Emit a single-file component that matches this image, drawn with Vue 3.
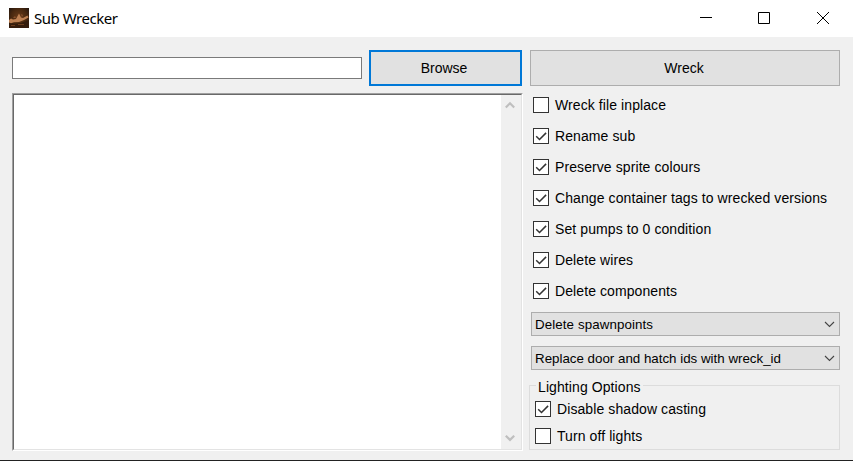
<script setup>
import { ref } from 'vue'

const path = ref('')
const log = ref('')
const options = ref([
  { label: 'Wreck file inplace', on: false },
  { label: 'Rename sub', on: true },
  { label: 'Preserve sprite colours', on: true },
  { label: 'Change container tags to wrecked versions', on: true },
  { label: 'Set pumps to 0 condition', on: true },
  { label: 'Delete wires', on: true },
  { label: 'Delete components', on: true },
])
const lighting = ref([
  { label: 'Disable shadow casting', on: true },
  { label: 'Turn off lights', on: false },
])
const selects = ['Delete spawnpoints', 'Replace door and hatch ids with wreck_id']
</script>

<template>
  <div class="window">
    <header class="titlebar">
      <svg class="logo" width="20" height="20" viewBox="0 0 20 20">
        <defs>
          <radialGradient id="glow" cx="50%" cy="45%" r="65%">
            <stop offset="0" stop-color="#6a3c1a" />
            <stop offset="0.6" stop-color="#48280f" />
            <stop offset="1" stop-color="#24160e" />
          </radialGradient>
        </defs>
        <rect width="20" height="20" fill="url(#glow)" />
        <path d="M0 15l5 1 7-1 8-3v8H0z" fill="#351c0c" />
        <path d="M0 12l2-1.5 2 1 3-.5 3-5.5 2 4 2 .5 4.500-2.500 1 2-4.500 2.500-5 2-5 .3-3 1-2-.8z" fill="#bd8052" />
        <path d="M4 10l2-2 1 2zM12 6l2 1-1 2z" fill="#8a532c" />
        <path d="M2 17.500h4M9 16.500h6" stroke="#6d3d1c" stroke-width="1" />
      </svg>
      <h1 class="title">Sub Wrecker</h1>
      <div class="controls">
        <svg width="12" height="12" viewBox="0 0 12 12"><path d="M0 5.5h12" /></svg>
        <svg width="12" height="12" viewBox="0 0 12 12"><path d="M.5 .5h11v11H.5z" /></svg>
        <svg width="12" height="12" viewBox="0 0 12 12"><path d="M0 0l12 12M12 0L0 12" /></svg>
      </div>
    </header>

    <main class="content">
      <section class="left">
        <div class="file-row">
          <input v-model="path" class="path" type="text" />
          <button class="btn focused">Browse</button>
        </div>
        <div class="log">
          <textarea v-model="log" class="log-text"></textarea>
          <div class="scrollbar">
            <svg width="10" height="8" viewBox="0 0 10 8"><path d="M.8 6.5L5 2.300l4.200 4.200" /></svg>
            <svg width="10" height="8" viewBox="0 0 10 8"><path d="M.8 1.700L5 5.900l4.200-4.200" /></svg>
          </div>
        </div>
      </section>

      <section class="right">
        <button class="btn">Wreck</button>
        <div class="options">
          <label v-for="o in options" :key="o.label" class="check" @click="o.on = !o.on">
            <span class="box">
              <svg v-if="o.on" width="14" height="14" viewBox="0 0 14 14"><path d="M2.200 7.300l3.300 3.200 6.600-6.600" /></svg>
            </span>
            <span class="check-label">{{ o.label }}</span>
          </label>
        </div>
        <div class="selects">
          <div v-for="s in selects" :key="s" class="select">
            <span>{{ s }}</span>
            <svg width="11" height="7" viewBox="0 0 11 7"><path d="M1 1l4.500 4.500L10 1" /></svg>
          </div>
        </div>
        <fieldset class="group">
          <legend>Lighting Options</legend>
          <label v-for="o in lighting" :key="o.label" class="check" @click="o.on = !o.on">
            <span class="box">
              <svg v-if="o.on" width="14" height="14" viewBox="0 0 14 14"><path d="M2.200 7.300l3.300 3.200 6.600-6.600" /></svg>
            </span>
            <span class="check-label">{{ o.label }}</span>
          </label>
        </fieldset>
      </section>
    </main>
  </div>
</template>

<style>
body {
  margin: 0;
  overflow: hidden;
}
</style>

<style scoped>
* {
  box-sizing: border-box;
}
.window {
  width: 853px;
  height: 461px;
  display: flex;
  flex-direction: column;
  background: #f0f0f0;
  border-bottom: 1px solid #222;
  font: 14px/18px "Liberation Sans", Arial, sans-serif;
  color: #000;
}
.titlebar {
  height: 37px;
  flex: none;
  display: flex;
  align-items: center;
  padding: 0 24px 0 9px;
  background: #fff;
}
.logo {
  margin-top: -1px;
}
.title {
  margin: -1px 0 0 5px;
  font: 400 15px/20px "Noto Sans", "Open Sans", sans-serif;
  letter-spacing: -0.47px;
}
.controls {
  margin: 0 0 1px auto;
  display: flex;
  gap: 47px;
}
.controls svg {
  display: block;
  fill: none;
  stroke: #000;
  stroke-width: 1;
}
.controls svg:first-child {
  margin-right: -1px;
}
.content {
  flex: 1;
  min-height: 0;
  display: grid;
  grid-template-columns: 511px 311px;
  column-gap: 6px;
  padding: 13px 13px 9px 12px;
}
.left {
  display: flex;
  flex-direction: column;
  gap: 7px;
}
.file-row {
  display: grid;
  grid-template-columns: 350px 153px;
  gap: 7px;
  align-items: center;
}
.path {
  height: 22px;
  border: 1px solid #7a7a7a;
  background: #fff;
  padding: 0 4px;
  outline: none;
}
.btn {
  height: 36px;
  border: 1px solid #adadad;
  background: #e1e1e1;
  font: inherit;
  color: inherit;
  padding: 0 3px 0 0;
}
.btn.focused {
  border: 2px solid #0078d7;
}
.log {
  flex: 1;
  display: flex;
  border: 1px solid;
  border-color: #a0a0a0 #fff #fff #a0a0a0;
}
.log-text {
  flex: 1;
  border: 1px solid;
  border-color: #696969 transparent #e3e3e3 #696969;
  border-right: 0;
  background: #fff;
  resize: none;
  outline: none;
}
.scrollbar {
  width: 21px;
  border: 1px solid #e3e3e3;
  border-top-color: #696969;
  border-left: 0;
  background: #f0f0f0;
  display: flex;
  flex-direction: column;
  align-items: center;
  justify-content: space-between;
  padding: 6px 2px 7px 0;
}
.scrollbar svg {
  fill: none;
  stroke: #bfbfbf;
  stroke-width: 2.2;
}
.right {
  display: flex;
  flex-direction: column;
}
.right > .btn {
  margin-left: 1px;
  padding-right: 2px;
}
.options {
  display: flex;
  flex-direction: column;
  gap: 15px;
  padding: 11px 0 0 4px;
}
.check {
  height: 16px;
  display: flex;
  align-items: center;
  gap: 6px;
}
.box {
  width: 16px;
  height: 16px;
  flex: none;
  border: 1px solid #333;
  background: #fff;
}
.box svg {
  display: block;
  fill: none;
  stroke: #333;
  stroke-width: 1.5;
}
.check-label {
  white-space: nowrap;
  letter-spacing: 0.09px;
}
.selects {
  display: flex;
  flex-direction: column;
  gap: 10px;
  margin: 13px 0 0 2px;
}
.select {
  height: 24px;
  display: flex;
  align-items: center;
  justify-content: space-between;
  border: 1px solid #adadad;
  background: #e1e1e1;
  padding: 1px 4px 0 3px;
  font-size: 13.33px;
}
.select:first-child {
  letter-spacing: 0.1px;
}
.select svg {
  fill: none;
  stroke: #444;
  stroke-width: 1.1;
}
.group {
  height: 72px;
  margin: 8px 0 0;
  padding: 9px 0 0 5px;
  border: 1px solid #dcdcdc;
  display: flex;
  flex-direction: column;
  gap: 11px;
}
.group legend {
  height: 14px;
  margin-left: 1px;
  padding: 0 2px;
  letter-spacing: 0.09px;
}
</style>
